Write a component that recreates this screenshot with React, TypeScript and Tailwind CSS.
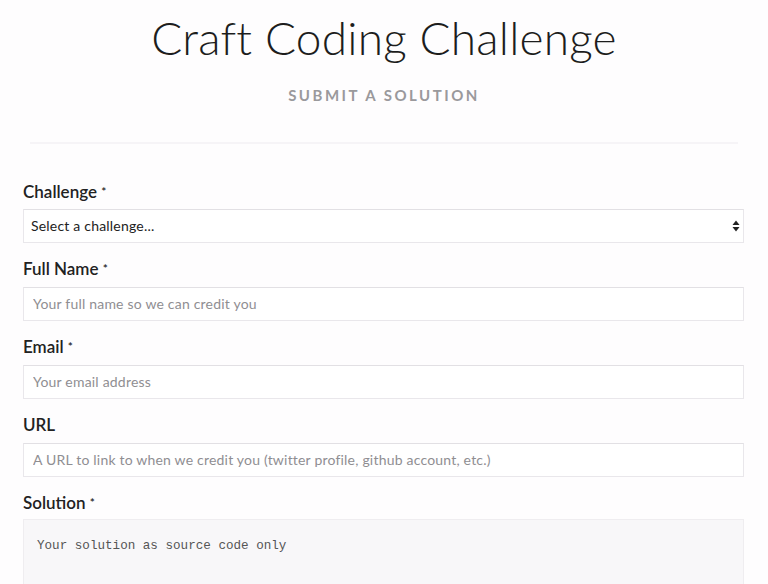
export default function App() {
  const fields = [
    { label: "Full Name", req: true, ph: "Your full name so we can credit you" },
    { label: "Email", req: true, ph: "Your email address" },
    { label: "URL", req: false, ph: "A URL to link to when we credit you (twitter profile, github account, etc.)" },
  ];

  return (
    <div className="h-[584px] overflow-hidden bg-[#fefdfe] text-[#222] font-['Lato','Noto_Sans',sans-serif]">
      <header className="pt-[11px] text-center">
        <h1 className="text-[46px] leading-[54px] font-light tracking-[0.2px] text-[#1d1d1d]">
          Craft Coding Challenge
        </h1>
        <p className="mt-[19px] text-[15px] font-bold tracking-[2.5px] text-[#9a999c] uppercase">
          Submit a Solution
        </p>
      </header>

      <hr className="mx-[30px] mt-[35px] border-0 h-[2px] bg-[#f6f4f7]" />

      <form className="pl-[23px] pr-[24px] mt-[38px]">
        <div className="flex flex-col">
          <label className="text-[17px] font-semibold leading-[20px] text-[#222]">
            Challenge <span className="text-[12px] align-top">*</span>
          </label>
          <div className="relative mt-[7px]">
            <select className="w-full h-[34px] appearance-none bg-white border border-[#e9e7eb] border-t-[#e2e0e4] pl-[7px] text-[14px] tracking-[0.2px] text-[#222] outline-none">
              <option>Select a challenge...</option>
            </select>
            <svg className="absolute right-[4px] top-[11px] pointer-events-none" width="8" height="12" viewBox="0 0 8 12">
              <path d="M4 0.5 L7.5 5 H0.5 Z" fill="#222" />
              <path d="M4 11.5 L7.5 7 H0.5 Z" fill="#222" />
            </svg>
          </div>
        </div>

        {fields.map((f) => (
          <div key={f.label} className="flex flex-col mt-[16px]">
            <label className="text-[17px] font-semibold leading-[20px] text-[#222]">
              {f.label} {f.req && <span className="text-[12px] align-top">*</span>}
            </label>
            <input
              className="mt-[8px] w-full h-[34px] bg-white border border-[#e9e7eb] border-t-[#e2e0e4] px-[9px] text-[14px] tracking-[0.2px] outline-none placeholder:text-[#8f8e92]"
              placeholder={f.ph}
            />
          </div>
        ))}

        <div className="flex flex-col mt-[16px]">
          <label className="text-[17px] font-semibold leading-[20px] text-[#222]">
            Solution <span className="text-[12px] align-top">*</span>
          </label>
          <textarea
            className="mt-[6px] w-full h-[120px] bg-[#f8f7f9] border border-[#efedf0] px-[13px] py-[17px] text-[12.6px] font-['Liberation_Mono',monospace] outline-none resize-none placeholder:text-[#555]"
            placeholder="Your solution as source code only"
          />
        </div>
      </form>
    </div>
  );
}
